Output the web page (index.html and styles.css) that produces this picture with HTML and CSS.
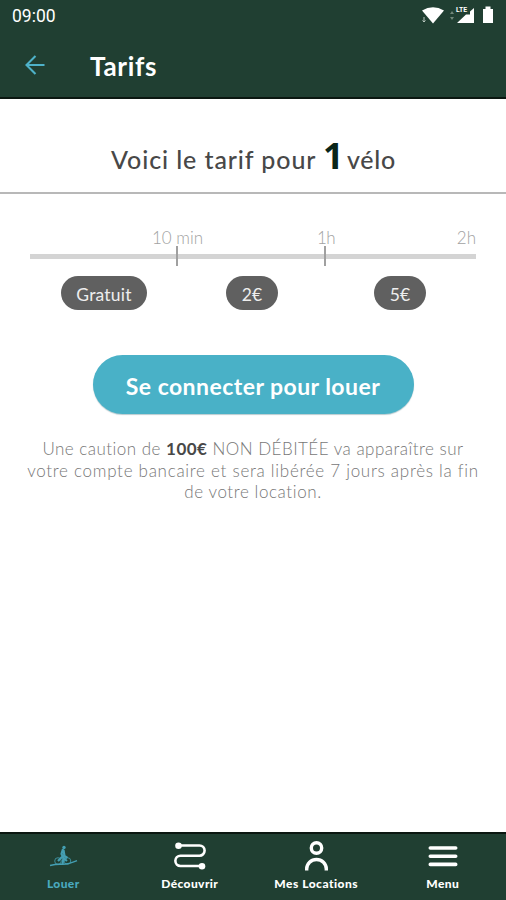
FILE: index.html
```html
<!DOCTYPE html>
<html lang="fr">
<head>
<meta charset="utf-8">
<title>Tarifs</title>
<link rel="stylesheet" href="styles.css">
</head>
<body>
<div class="app">
  <header class="top">
    <div class="status">
      <span class="time">09:00</span>
      <svg class="status-icons" width="78" height="22" viewBox="0 0 78 22" fill="#fff">
        <path d="M3 5.500Q14-1 25 5.500L14 18.500Z"/>
        <path d="M5 12v5M3.500 15.500L5 17l1.500-1.500" fill="none" stroke="#b9c8bf"/>
        <path d="M31 9l2-3 2 3zM31 12l2 3 2-3z" fill="#708679"/>
        <path d="M55 3v15H38L47 9.500h4V6.500Z"/>
        <text class="lte" x="37" y="7.200" textLength="11" lengthAdjust="spacingAndGlyphs">LTE</text>
        <path d="M64 4h2.500V1.500h5V4H74v14H64Z"/>
      </svg>
    </div>
    <div class="title-bar">
      <svg class="back" width="22" height="22" viewBox="0 0 22 22" fill="none" stroke="#4eb2c9" stroke-width="2.100"><path d="M20.500 11H3M11.500 2L2.500 11l9 9"/></svg>
      <h1>Tarifs</h1>
    </div>
  </header>

  <h2 class="heading"><span class="lead">Voici le tarif pour</span><strong>1</strong><span class="unit">vélo</span></h2>

  <main>
    <section class="rates">
      <div class="durations"><span>10 min</span><span class="hour">1h</span><span class="end">2h</span></div>
      <div class="track"><i></i><i></i><b></b></div>
      <div class="prices">
        <div><span class="pill free">Gratuit</span></div>
        <div><span class="pill">2€</span></div>
        <div><span class="pill">5€</span></div>
      </div>
    </section>
    <button class="login"><span>Se connecter pour louer</span></button>
    <p class="deposit"><span class="l1">Une caution de <strong>100€</strong> NON DÉBITÉE va apparaître sur</span><span class="l2">votre compte bancaire et sera libérée 7 jours après la fin</span><span class="l3">de votre location.</span></p>
  </main>

  <nav>
    <a class="active">
      <svg width="32" height="32" viewBox="0 0 32 32" fill="none" stroke="#449fb3"><circle cx="11" cy="20" r="3.300" stroke-width=".8"/><circle cx="20.500" cy="20" r="3.300" stroke-width=".8"/><path d="M3 24.500Q9 23 15 23.300T30 19.700" stroke-width="1.400"/><path d="M16 8L14.500 13l2 4-1 6M16.500 9l1 6 3 2M11 20l4-4 5 4" stroke-width="2.200"/><circle cx="17" cy="6.500" r="1.700" fill="#449fb3" stroke="none"/></svg>
      <span class="n1">Louer</span>
    </a>
    <a>
      <svg width="32" height="32" viewBox="0 0 32 32" fill="none" stroke="#fff" stroke-width="2.600"><path d="M4 4.500H25.500a5 5 0 0 1 0 10.200H6.500a5 5 0 0 0 0 10.300H28"/><circle cx="4.500" cy="4.800" r="3.300" fill="#fff" stroke="none"/><circle cx="28" cy="25.200" r="3.300" fill="#fff" stroke="none"/></svg>
      <span class="n2">Découvrir</span>
    </a>
    <a>
      <svg width="32" height="32" viewBox="0 0 32 32" fill="none" stroke="#fff" stroke-width="3.400"><circle cx="16.500" cy="7" r="5.200"/><path d="M6.700 29.500V28a9.800 9.500 0 0 1 19.600 0V29.500"/></svg>
      <span class="n3">Mes Locations</span>
    </a>
    <a>
      <svg width="32" height="32" viewBox="0 0 32 32" stroke="#fff" stroke-width="3.600" stroke-linecap="round"><path d="M3.300 7H28.700M3.300 15.200H28.700M3.300 23.400H28.700"/></svg>
      <span class="n4">Menu</span>
    </a>
  </nav>
</div>
</body>
</html>
```
FILE: styles.css
```css
* { box-sizing: border-box; }
body { margin: 0; font-family: Lato, "Liberation Sans", sans-serif; background: #fff; }
.app { width: 506px; height: 900px; display: flex; flex-direction: column; overflow: hidden; }
.top { height: 99px; background: #203f32; border-bottom: 2px solid #0b1711; color: #fff; }
.status { height: 32px; display: flex; justify-content: space-between; align-items: center; padding: 0 9px 0 12px; }
.time { font: 400 17.500px Roboto, sans-serif; }
.lte { font: 700 7px Roboto, sans-serif; }
.title-bar { height: 65px; display: flex; align-items: center; padding: 0 0 0 24px; }
h1 { margin: 2px 0 0 44px; font-size: 26px; line-height: 30px; font-weight: 700; letter-spacing: .7px; }
.heading { margin: 0; height: 95px; padding: 37px 0 0 111px; display: flex; align-items: baseline; border-bottom: 2px solid #b8b8b8; color: #484848; font-size: 25px; line-height: 44px; font-weight: 500; white-space: nowrap; }
.lead { width: 212px; letter-spacing: .9px; }
.heading strong { width: 24px; color: #0a2619; font: 700 36px/40px "Open Sans", sans-serif; }
.unit { letter-spacing: .7px; }
main { flex: 1; display: flex; flex-direction: column; align-items: center; }
.rates { width: 446px; padding-top: 33px; }
.durations { display: grid; grid-template-columns: 295px 1fr 1fr; height: 19px; color: #a2a2a2; font-size: 17px; line-height: 21px; font-weight: 300; }
.durations span:first-child { padding-left: 122px; letter-spacing: 0; }
.durations .hour { margin-left: -8px; letter-spacing: -.5px; }
.durations .end { text-align: right; }
.track { height: 20px; display: grid; grid-template-columns: 148px 148px 150px; align-items: center; background: linear-gradient(#d4d4d4, #d4d4d4) center / 100% 5px no-repeat; }
.track i { height: 20px; border-right: 2px solid #a0a0a0; }
.prices { display: grid; grid-template-columns: 148px 148px 148px; justify-items: center; padding-top: 10px; }
.pill { display: block; width: 52px; height: 34px; padding-top: 2px; border-radius: 17px; background: #606060; color: #eee; text-align: center; font-size: 17.500px; line-height: 34px; }
.free { width: 86px; letter-spacing: .2px; }
.login { margin: 45px 0 0; width: 321px; height: 59px; padding: 2px 0 0; border: 0; border-radius: 30px; background: #49b1c7; box-shadow: 0 1px 1px #b8cbd0; color: #fff; font: 700 23px Lato, sans-serif; letter-spacing: .45px; white-space: nowrap; }
.deposit { margin: 24px 0 0; color: #777; font-size: 17px; line-height: 21.700px; font-weight: 300; text-align: center; white-space: nowrap; }
.deposit > span { display: block; }
.deposit strong { color: #484848; font-weight: 700; }
.l1 { letter-spacing: .48px; }
.l2 { letter-spacing: .72px; }
.l3 { letter-spacing: .6px; }
nav { height: 68px; display: grid; grid-template-columns: repeat(4, 1fr); background: #203f32; border-top: 2px solid #0b1711; color: #fff; }
nav a { display: flex; flex-direction: column; align-items: center; padding-top: 7px; }
nav svg { flex: none; }
nav span { margin-top: 3px; font-size: 12px; line-height: 16px; font-weight: 900; white-space: nowrap; }
.n1, .n2, .n4 { letter-spacing: .4px; }
.n3 { letter-spacing: .5px; }
.active { color: #49a9bf; }
```
